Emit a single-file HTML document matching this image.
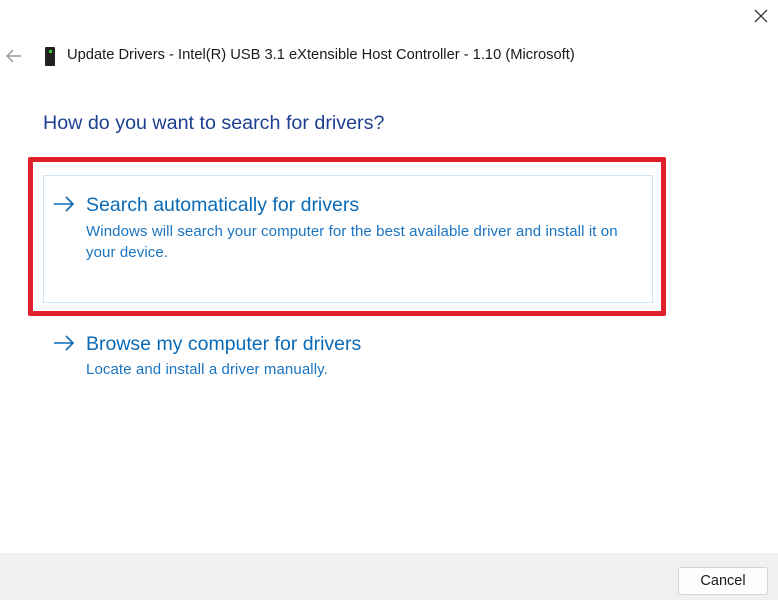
<!DOCTYPE html>
<html><head><style>
body{margin:0;width:778px;height:600px;background:#fff;font-family:"Liberation Sans",sans-serif;position:relative;overflow:hidden}
.a{position:absolute;white-space:nowrap}
</style></head><body>
<svg class="a" style="left:753px;top:8px" width="16" height="16"><path d="M2 2L14 14M14 2L2 14" stroke="#333" stroke-width="1.3"/></svg>
<svg class="a" style="left:4px;top:48px" width="18" height="16"><path d="M17 8H3M9 2L3 8L9 14" stroke="#999" stroke-width="1.4" fill="none"/></svg>
<div class="a" style="left:45px;top:47px;width:10px;height:19px;background:#222;border-radius:1px"></div>
<div class="a" style="left:49px;top:50px;width:3px;height:3px;background:#3c3"></div>
<div class="a" style="left:67px;top:47px;font-size:14.7px;color:#1a1a1a">Update Drivers - Intel(R) USB 3.1 eXtensible Host Controller - 1.10 (Microsoft)</div>
<div class="a" style="left:43px;top:112px;font-size:19.7px;color:#1d3f8f">How do you want to search for drivers?</div>
<div class="a" style="left:28px;top:157px;width:628px;height:149px;border:5px solid #e0202a;border-radius:2px"></div>
<div class="a" style="left:43px;top:175px;width:608px;height:126px;border:1px solid #cfe3f3"></div>
<svg class="a" style="left:53px;top:196px" width="22" height="16"><path d="M1 8H20M13 1L20 8L13 15" stroke="#0a6ab6" stroke-width="1.6" fill="none"/></svg>
<div class="a" style="left:86px;top:194px;font-size:19.5px;color:#0a6ab6">Search automatically for drivers</div>
<div class="a" style="left:86px;top:221px;font-size:15px;letter-spacing:0.1px;line-height:21px;color:#1a74c2">Windows will search your computer for the best available driver and install it on<br>your device.</div>
<svg class="a" style="left:53px;top:335px" width="22" height="16"><path d="M1 8H20M13 1L20 8L13 15" stroke="#0a6ab6" stroke-width="1.6" fill="none"/></svg>
<div class="a" style="left:86px;top:333px;font-size:19.5px;color:#0a6ab6">Browse my computer for drivers</div>
<div class="a" style="left:86px;top:361px;font-size:15px;letter-spacing:0.1px;color:#1a74c2">Locate and install a driver manually.</div>
<div class="a" style="left:0;top:553px;width:778px;height:47px;background:#f0f0f0"></div>
<div class="a" style="left:678px;top:567px;width:88px;height:26px;background:#fdfdfd;border:1px solid #d4d4d4;border-radius:3px;font-size:14.5px;color:#1a1a1a;text-align:center;line-height:26px">Cancel</div>
</body></html>
